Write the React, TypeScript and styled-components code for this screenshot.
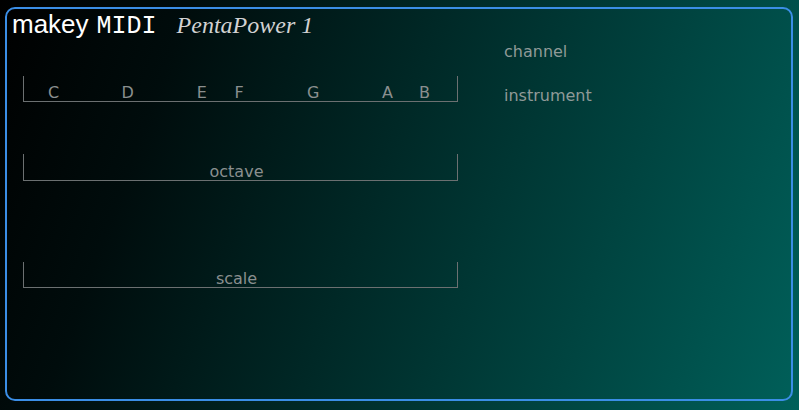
import React from 'react';
import styled, { createGlobalStyle } from 'styled-components';

const GlobalStyle = createGlobalStyle`
  html, body {
    margin: 0;
    padding: 0;
  }
  body {
    font-family: "DejaVu Sans", Verdana, sans-serif;
    overflow: hidden;
  }
`;

const Page = styled.div`
  width: 100vw;
  height: 100vh;
  box-sizing: border-box;
  padding: 7px 6px 9px 5px;
  background: linear-gradient(110deg, #000000 0%, #000c0c 20%, #00605a 100%);
  display: flex;
`;

const Panel = styled.div`
  flex: 1;
  box-sizing: border-box;
  border: 2px solid #3b8ee6;
  border-radius: 10px;
  display: flex;
  flex-direction: column;
`;

const Header = styled.div`
  display: flex;
  align-items: baseline;
  height: 30px;
  padding-left: 5px;
  white-space: nowrap;
`;

const Makey = styled.span`
  font-family: "Liberation Sans", Arial, sans-serif;
  font-size: 26px;
  line-height: 30px;
  color: #ffffff;
`;

const Midi = styled.span`
  font-family: "Liberation Mono", "Courier New", monospace;
  font-size: 25px;
  line-height: 30px;
  color: #ffffff;
  margin-left: 8px;
`;

const Subtitle = styled.span`
  font-family: "Liberation Serif", "Times New Roman", serif;
  font-style: italic;
  font-size: 24px;
  line-height: 30px;
  color: #d2d2d2;
  margin-left: 20px;
`;

const Body = styled.div`
  display: flex;
  padding-left: 16px;
  gap: 46px;
`;

const LeftCol = styled.div`
  width: 435px;
  display: flex;
  flex-direction: column;
`;

const Bracket = styled.div<{ $top: number; $h: number }>`
  margin-top: ${(p) => p.$top}px;
  height: ${(p) => p.$h}px;
  box-sizing: border-box;
  border: 1px solid #6b7071;
  border-top: none;
  display: flex;
  align-items: flex-end;
`;

const NoteGrid = styled.div`
  display: grid;
  grid-template-columns: repeat(12, 37.1px);
  padding-left: 11px;
  width: 0;
`;

const Note = styled.span<{ $col: number }>`
  grid-column: ${(p) => p.$col + 1};
  grid-row: 1;
  text-align: center;
  font-size: 16px;
  line-height: 16px;
  color: #8a8f8f;
`;

const CenterLabel = styled.span`
  flex: 1;
  text-align: center;
  padding-right: 8px;
  font-size: 16px;
  line-height: 16px;
  color: #8a8f8f;
`;

const RightCol = styled.div`
  display: flex;
  flex-direction: column;
  gap: 25px;
  padding-top: 3px;
`;

const SideLabel = styled.span`
  font-size: 16px;
  line-height: 19px;
  color: #8f9a98;
`;

const notes: [string, number][] = [
  ['C', 0],
  ['D', 2],
  ['E', 4],
  ['F', 5],
  ['G', 7],
  ['A', 9],
  ['B', 10],
];

export default function App() {
  return (
    <>
      <GlobalStyle />
      <Page>
        <Panel>
          <Header>
            <Makey>makey</Makey>
            <Midi>MIDI</Midi>
            <Subtitle>PentaPower 1</Subtitle>
          </Header>
          <Body>
            <LeftCol>
              <Bracket $top={37} $h={26}>
                <NoteGrid>
                  {notes.map(([n, c]) => (
                    <Note key={n} $col={c}>
                      {n}
                    </Note>
                  ))}
                </NoteGrid>
              </Bracket>
              <Bracket $top={52} $h={27}>
                <CenterLabel>octave</CenterLabel>
              </Bracket>
              <Bracket $top={81} $h={26}>
                <CenterLabel>scale</CenterLabel>
              </Bracket>
            </LeftCol>
            <RightCol>
              <SideLabel>channel</SideLabel>
              <SideLabel>instrument</SideLabel>
            </RightCol>
          </Body>
        </Panel>
      </Page>
    </>
  );
}
